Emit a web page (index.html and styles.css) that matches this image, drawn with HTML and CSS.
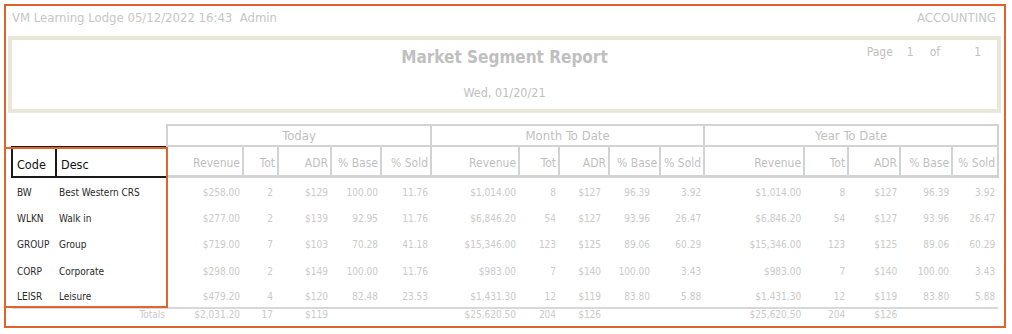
FILE: index.html
```html
<!DOCTYPE html>
<html>
<head>
<meta charset="utf-8">
<link rel="stylesheet" href="styles.css">
</head>
<body>
<div class="page">
  <div class="topbar">
    <span class="site">VM Learning Lodge 05/12/2022 16:43&nbsp;&nbsp;Admin</span>
    <span class="dept">ACCOUNTING</span>
  </div>
  <div class="titlebox">
    <div class="title">Market Segment Report</div>
    <div class="pageno"><span>Page</span><span>1</span><span>of</span><span>1</span></div>
    <div class="date">Wed, 01/20/21</div>
  </div>
  <table class="report">
    <colgroup>
      <col style="width:44px"><col style="width:111px">
      <col style="width:76px"><col style="width:35px"><col style="width:53px"><col style="width:50px"><col style="width:50px">
      <col style="width:88px"><col style="width:40px"><col style="width:50px"><col style="width:51px"><col style="width:44px">
      <col style="width:100px"><col style="width:44px"><col style="width:52px"><col style="width:52px"><col style="width:46px">
    </colgroup>
    <thead>
      <tr class="groups">
        <th class="blank" colspan="2"></th>
        <th colspan="5">Today</th>
        <th colspan="5">Month To Date</th>
        <th colspan="5">Year To Date</th>
      </tr>
      <tr class="cols">
        <th class="key">Code</th><th class="key">Desc</th>
        <th>Revenue</th><th>Tot</th><th>ADR</th><th>% Base</th><th>% Sold</th>
        <th>Revenue</th><th>Tot</th><th>ADR</th><th>% Base</th><th>% Sold</th>
        <th>Revenue</th><th>Tot</th><th>ADR</th><th>% Base</th><th>% Sold</th>
      </tr>
    </thead>
    <tbody>
      <tr>
        <td class="code">BW</td><td class="desc">Best Western CRS</td>
        <td>$258.00</td><td class="tt">2</td><td>$129</td><td>100.00</td><td>11.76</td>
        <td>$1,014.00</td><td>8</td><td class="ma">$127</td><td class="mb">96.39</td><td>3.92</td>
        <td>$1,014.00</td><td>8</td><td>$127</td><td>96.39</td><td>3.92</td>
      </tr>
      <tr>
        <td class="code">WLKN</td><td class="desc">Walk in</td>
        <td>$277.00</td><td class="tt">2</td><td>$139</td><td>92.95</td><td>11.76</td>
        <td>$6,846.20</td><td>54</td><td class="ma">$127</td><td class="mb">93.96</td><td>26.47</td>
        <td>$6,846.20</td><td>54</td><td>$127</td><td>93.96</td><td>26.47</td>
      </tr>
      <tr>
        <td class="code">GROUP</td><td class="desc">Group</td>
        <td>$719.00</td><td class="tt">7</td><td>$103</td><td>70.28</td><td>41.18</td>
        <td>$15,346.00</td><td>123</td><td class="ma">$125</td><td class="mb">89.06</td><td>60.29</td>
        <td>$15,346.00</td><td>123</td><td>$125</td><td>89.06</td><td>60.29</td>
      </tr>
      <tr>
        <td class="code">CORP</td><td class="desc">Corporate</td>
        <td>$298.00</td><td class="tt">2</td><td>$149</td><td>100.00</td><td>11.76</td>
        <td>$983.00</td><td>7</td><td class="ma">$140</td><td class="mb">100.00</td><td>3.43</td>
        <td>$983.00</td><td>7</td><td>$140</td><td>100.00</td><td>3.43</td>
      </tr>
      <tr>
        <td class="code">LEISR</td><td class="desc">Leisure</td>
        <td>$479.20</td><td class="tt">4</td><td>$120</td><td>82.48</td><td>23.53</td>
        <td>$1,431.30</td><td>12</td><td class="ma">$119</td><td class="mb">83.80</td><td>5.88</td>
        <td>$1,431.30</td><td>12</td><td>$119</td><td>83.80</td><td>5.88</td>
      </tr>
      <tr class="totals">
        <td></td><td class="label">Totals</td>
        <td>$2,031.20</td><td class="tt">17</td><td>$119</td><td></td><td></td>
        <td>$25,620.50</td><td>204</td><td class="ma">$126</td><td></td><td></td>
        <td>$25,620.50</td><td>204</td><td>$126</td><td></td><td></td>
      </tr>
    </tbody>
  </table>
  <div class="highlight"></div>
</div>
</body>
</html>
```
FILE: styles.css
```css
html, body {
  margin: 0;
  padding: 0;
  background: #ffffff;
}
body {
  font-family: "DejaVu Sans Condensed", "DejaVu Sans", sans-serif;
  font-stretch: condensed;
  width: 1012px;
  height: 334px;
  overflow: hidden;
}
.page {
  position: relative;
  box-sizing: border-box;
  margin: 4px 0 0 4px;
  width: 1002px;
  height: 324px;
  border: 2px solid #e0622c;
}
.topbar {
  display: flex;
  justify-content: space-between;
  align-items: center;
  height: 30px;
  padding: 0 8px 0 6px;
  box-sizing: border-box;
  color: #c6c6c6;
  font-size: 13px;
}
.topbar .site { margin-top: -8px; }
.topbar .dept { margin-top: -8px; }
.titlebox {
  position: relative;
  box-sizing: border-box;
  margin-left: 2px;
  width: 993px;
  height: 77px;
  border: 4px solid #e9e8d8;
  display: flex;
  flex-direction: column;
  align-items: center;
  color: #c0c0c0;
}
.title {
  font-size: 17px;
  font-weight: bold;
  margin-top: 7px;
  line-height: 20px;
}
.date {
  font-size: 12.5px;
  margin-top: 18px;
  line-height: 16px;
}
.pageno {
  position: absolute;
  right: 16px;
  top: 5px;
  font-size: 12px;
  display: flex;
  gap: 13px;
  color: #c0c0c0;
}
.pageno span { color: #c0c0c0; }
.pageno span:nth-child(2) { margin-left: 1px; }
.pageno span:nth-child(3) { margin-left: 3px; margin-right: 21px; }
.report {
  margin: 11px 0 0 5px;
  border-collapse: collapse;
  table-layout: fixed;
  width: 986px;
  font-size: 10px;
}
.report th {
  font-weight: normal;
  color: #bfbfbf;
  border: 2px solid #d3d3d3;
  padding: 0 2px 0 0;
  text-align: right;
  white-space: nowrap;
  overflow: hidden;
}
.groups th {
  height: 19px;
  font-size: 13px;
  text-align: center;
  padding: 0;
}
.groups th.blank {
  border: none;
}
.cols th {
  height: 23px;
  font-size: 12px;
  vertical-align: bottom;
  padding-bottom: 5px;
  border-bottom-width: 3px;
}
.cols th.key {
  color: #111;
  text-align: left;
  border: 2px solid #1a1a1a;
  border-top-width: 1px;
  padding-left: 4px;
  font-size: 12.5px;
  padding-bottom: 4px;
  height: 21px;
  box-shadow: 0 2px 0 #cfcfcf;
}
.report td {
  height: 26.3px;
  padding: 5px 3px 0 0;
  box-sizing: border-box;
  text-align: right;
  color: #cacaca;
  white-space: nowrap;
}
.report td.code {
  text-align: left;
  padding-left: 5px;
  color: #2a2a2a;
}
.report td.desc {
  text-align: left;
  padding-left: 3px;
  color: #2a2a2a;
}
.report td.tt { padding-right: 5px; }
.report td.ma { padding-right: 8px; }
.report td.mb { padding-right: 10px; }
.totals td {
  height: 16px;
  padding-top: 0;
  line-height: 12px;
  vertical-align: top;
  border-top: 2px solid #d8d8d8;
}
.totals td.label { padding-right: 2px; }
.highlight {
  position: absolute;
  left: -2px;
  top: 141px;
  width: 164px;
  height: 161px;
  box-sizing: border-box;
  border: 2px solid #e0652d;
  pointer-events: none;
}
```
